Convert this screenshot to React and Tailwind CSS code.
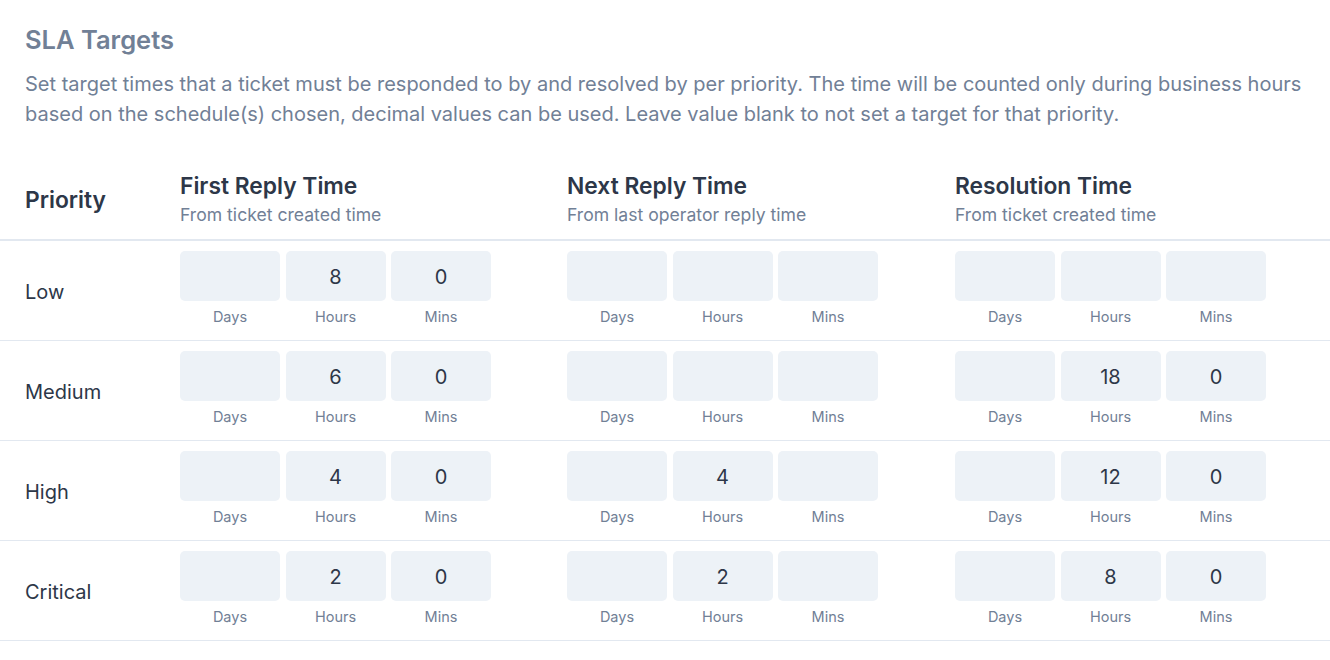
import React from "react";

const rows = [
  { name: "Low", vals: [["", "8", "0"], ["", "", ""], ["", "", ""]] },
  { name: "Medium", vals: [["", "6", "0"], ["", "", ""], ["", "18", "0"]] },
  { name: "High", vals: [["", "4", "0"], ["", "4", ""], ["", "12", "0"]] },
  { name: "Critical", vals: [["", "2", "0"], ["", "2", ""], ["", "8", "0"]] },
];

const cols = [
  ["First Reply Time", "From ticket created time"],
  ["Next Reply Time", "From last operator reply time"],
  ["Resolution Time", "From ticket created time"],
];

function Group({ vals }) {
  const labels = ["Days", "Hours", "Mins"];
  return (
    <div className="flex gap-[5.5px]">
      {vals.map((v, i) => (
        <div key={i} className="flex flex-col items-center w-[100px]">
          <div className="w-[100px] h-[50px] rounded-[5px] bg-[#edf2f7] flex items-center justify-center pt-[1px] text-[20px] text-[#2d3748]">
            {v}
          </div>
          <div className="mt-[6px] text-[14.5px] leading-[20px] text-[#718096]">{labels[i]}</div>
        </div>
      ))}
    </div>
  );
}

export default function App() {
  return (
    <div className="bg-white w-[1330px] min-h-[660px] pt-[24px]" style={{ fontFamily: "Inter, 'Noto Sans', sans-serif" }}>
      <div className="px-[25px]">
        <h1 className="text-[25.5px] leading-[32px] font-semibold text-[#718096]">SLA Targets</h1>
        <p className="mt-[13px] text-[20px] leading-[30px] text-[#718096]">
          Set target times that a ticket must be responded to by and resolved by per priority. The time will be counted only during business hours based on the schedule(s) chosen, decimal values can be used. Leave value blank to not set a target for that priority.
        </p>
      </div>
      <div className="mt-[42px]">
        <div className="grid grid-cols-[180px_387px_388px_1fr] border-b-2 border-[#e2e8f0] pb-[11px]">
          <div className="pl-[25px] flex items-center text-[22.8px] leading-[30px] font-semibold text-[#2d3748]">Priority</div>
          {cols.map(([t, s]) => (
            <div key={t}>
              <div className="text-[22.8px] leading-[30px] font-semibold text-[#2d3748]">{t}</div>
              <div className="text-[17.6px] leading-[26px] text-[#718096] mt-[1px]">{s}</div>
            </div>
          ))}
        </div>
        {rows.map((r) => (
          <div key={r.name} className="grid grid-cols-[180px_387px_388px_1fr] border-b border-[#e2e8f0] pt-[10px] pb-[13px]">
            <div className="pl-[25px] pt-[5px] flex items-center text-[20px] text-[#2d3748]">{r.name}</div>
            {r.vals.map((v, i) => (
              <Group key={i} vals={v} />
            ))}
          </div>
        ))}
      </div>
    </div>
  );
}
